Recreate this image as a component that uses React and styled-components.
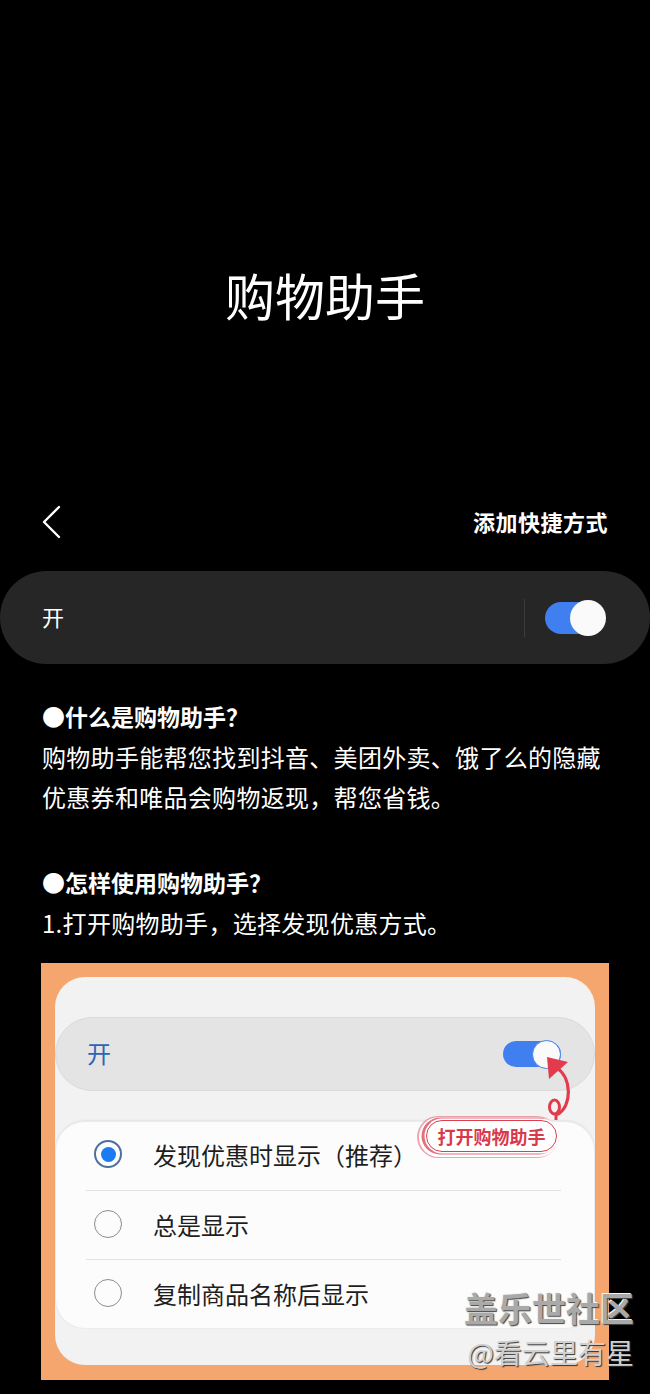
import React from "react";
import styled, { createGlobalStyle } from "styled-components";

const Global = createGlobalStyle`
  html, body { margin: 0; padding: 0; background: #000; }
  body { font-family: "Noto Sans CJK SC", "Noto Sans", sans-serif; color: #fff; }
  * { box-sizing: border-box; }
`;

const Page = styled.div`
  position: relative;
  width: 650px;
  height: 1394px;
  background: #000;
  overflow: hidden;
`;

const Title = styled.h1`
  margin: 0;
  padding-top: 261px;
  font-size: 50px;
  line-height: 66px;
  font-weight: 400;
  text-align: center;
  color: #fff;
`;

const Header = styled.div`
  display: flex;
  align-items: center;
  justify-content: space-between;
  height: 56px;
  margin-top: 167px;
  padding: 0 42px 0 42px;
`;

const HeaderAction = styled.span`
  font-size: 22px;
  font-weight: 700;
  line-height: 30px;
  margin-top: -3px;
  color: #fff;
  letter-spacing: 0.5px;
`;

const SwitchCard = styled.div`
  display: flex;
  align-items: center;
  height: 93px;
  margin-top: 21px;
  border-radius: 47px;
  background: #262626;
  padding: 0 47px 0 42px;
`;

const SwitchLabel = styled.span`
  flex: 1;
  font-size: ${(p) => p.$size || 22}px;
  line-height: 30px;
  margin-top: -3px;
  color: ${(p) => p.$color || "#fff"};
`;

const VDivider = styled.div`
  width: 1px;
  height: 38px;
  background: #3c3c3c;
  margin-right: 20px;
`;

const Track = styled.div`
  position: relative;
  width: ${(p) => p.$w}px;
  height: ${(p) => p.$h}px;
  border-radius: ${(p) => p.$h / 2}px;
  background: #3f7ff0;
`;

const Knob = styled.div`
  position: absolute;
  right: ${(p) => p.$right}px;
  top: 50%;
  width: ${(p) => p.$d}px;
  height: ${(p) => p.$d}px;
  margin-top: ${(p) => -p.$d / 2}px;
  border-radius: 50%;
  background: #fafafa;
  border: ${(p) => (p.$ring ? "1.5px solid #3f7ff0" : "none")};
`;

const Section = styled.div`
  padding: 0 42px;
  margin-top: ${(p) => p.$mt}px;
`;

const Heading = styled.div`
  font-size: 23px;
  font-weight: 700;
  line-height: 41px;
  color: #fff;
`;

const Para = styled.div`
  font-size: 24px;
  line-height: 40px;
  color: #fff;
  letter-spacing: 0.3px;
`;

const Orange = styled.div`
  margin: 20px 41px 0 41px;
  background: #f5a66e;
  padding: 14px 14px 15px 14px;
`;

const Panel = styled.div`
  position: relative;
  background: #f2f2f2;
  border-radius: 30px;
  padding: 40px 0 36px 0;
`;

const InnerSwitch = styled.div`
  display: flex;
  align-items: center;
  height: 74px;
  border-radius: 37px;
  background: #e4e4e4;
  border: 1px solid #dadada;
  padding: 0 33px 0 31px;
`;

const Options = styled.div`
  margin-top: 30px;
  background: #fcfcfc;
  border-radius: 30px;
  box-shadow: 0 -1px 2px rgba(0, 0, 0, 0.06);
  border: 1px solid #ececec;
`;

const OptionRow = styled.div`
  display: flex;
  align-items: center;
  height: 68px;
  padding-left: 38px;
  padding-bottom: ${(p) => (p.$first ? 4 : 2)}px;
  gap: 31px;
  font-size: 24px;
  color: #1e1e1e;
`;

const HDivider = styled.div`
  height: 1px;
  margin: 0 33px 0 30px;
  background: #e2e2e2;
`;

const Radio = styled.span`
  position: relative;
  width: 28px;
  height: 28px;
  border-radius: 50%;
  flex: none;
  border: ${(p) => (p.$on ? "2px solid #4e6f9c" : "1.5px solid #8c8c8c")};
  &::after {
    content: "";
    display: ${(p) => (p.$on ? "block" : "none")};
    position: absolute;
    left: 50%;
    top: 50%;
    width: 15px;
    height: 15px;
    margin: -7.5px 0 0 -7.5px;
    border-radius: 50%;
    background: #1b7cf0;
  }
`;

const Callout = styled.div`
  position: absolute;
  left: 371px;
  top: 143px;
  width: 131px;
  height: 32px;
  border-radius: 16px;
  background: #fff;
  border: 1.5px solid #d9404f;
  box-shadow: 0 0 0 1.5px #fff, -2px 0 0 2.5px rgba(217, 64, 79, 0.75), -3px 1px 0 4px #fff, -4px 1px 0 5px rgba(217, 64, 79, 0.45);
  display: flex;
  align-items: center;
  justify-content: center;
  font-size: 18px;
  font-weight: 700;
  color: #d93a4b;
`;

const ArrowSvg = styled.svg`
  position: absolute;
  left: 475px;
  top: 67px;
  overflow: visible;
`;

const Watermark = styled.div`
  position: absolute;
  right: 16px;
  top: 1287px;
  display: flex;
  flex-direction: column;
  align-items: flex-end;
`;

const WmBig = styled.span`
  font-size: 34px;
  font-weight: 700;
  line-height: 42px;
  color: #a9a9a9;
  text-shadow: 1px 1px 1px #444, -1px -1px 0 #f4f4f4;
`;

const WmSmall = styled.span`
  font-size: 28px;
  line-height: 38px;
  margin-top: 4px;
  color: #d0d0d0;
  text-shadow: 1px 1px 1px #333;
`;

function Toggle({ w, h, d, right, ring }) {
  return (
    <Track $w={w} $h={h}>
      <Knob $d={d} $right={right} $ring={ring} />
    </Track>
  );
}

export default function App() {
  return (
    <Page>
      <Global />
      <Title>购物助手</Title>
      <Header>
        <svg width="20" height="34" viewBox="0 0 20 34">
          <polyline points="17,2 2,17 17,32" fill="none" stroke="#fff" strokeWidth="2.4" strokeLinecap="round" strokeLinejoin="round" />
        </svg>
        <HeaderAction>添加快捷方式</HeaderAction>
      </Header>
      <SwitchCard>
        <SwitchLabel>开</SwitchLabel>
        <VDivider />
        <Toggle w={58} h={32} d={36} right={-3} />
      </SwitchCard>

      <Section $mt={32}>
        <Heading>●什么是购物助手？</Heading>
        <Para>购物助手能帮您找到抖音、美团外卖、饿了么的隐藏</Para>
        <Para>优惠券和唯品会购物返现，帮您省钱。</Para>
      </Section>
      <Section $mt={45}>
        <Heading>●怎样使用购物助手？</Heading>
        <Para>1.打开购物助手，选择发现优惠方式。</Para>
      </Section>

      <Orange>
        <Panel>
          <InnerSwitch>
            <SwitchLabel $size={24} $color="#2d66b5">开</SwitchLabel>
            <Toggle w={58} h={26} d={29} right={0} ring />
          </InnerSwitch>
          <Options>
            <OptionRow $first>
              <Radio $on />
              <span>发现优惠时显示（推荐）</span>
            </OptionRow>
            <HDivider />
            <OptionRow>
              <Radio />
              <span>总是显示</span>
            </OptionRow>
            <HDivider />
            <OptionRow>
              <Radio />
              <span>复制商品名称后显示</span>
            </OptionRow>
          </Options>
          <ArrowSvg width="50" height="80" viewBox="0 0 50 80">
            <path d="M27 24 C 42 34, 42 62, 28 70" fill="none" stroke="#e23b4b" strokeWidth="3.2" strokeLinecap="round" />
            <ellipse cx="24.5" cy="63" rx="5" ry="7" fill="none" stroke="#e23b4b" strokeWidth="3" />
            <path d="M26 70 L 26 76" fill="none" stroke="#e23b4b" strokeWidth="3" />
            <polygon points="17,13 38,18 19,35" fill="#e23b4b" />
          </ArrowSvg>
          <Callout>打开购物助手</Callout>
        </Panel>
      </Orange>

      <Watermark>
        <WmBig>盖乐世社区</WmBig>
        <WmSmall>@看云里有星</WmSmall>
      </Watermark>
    </Page>
  );
}
